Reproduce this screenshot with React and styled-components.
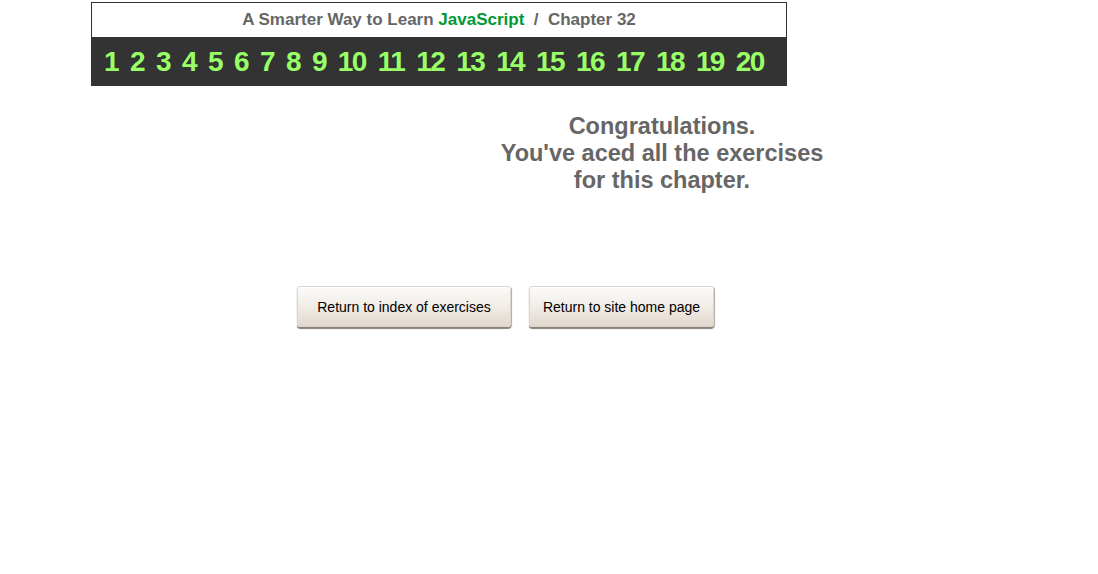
import React from "react";
import styled, { createGlobalStyle } from "styled-components";

const Global = createGlobalStyle`
  html, body { margin: 0; padding: 0; background: #fff; }
  body { font-family: "Liberation Sans", Arial, sans-serif; }
`;

const Page = styled.div`
  width: 1098px;
  height: 574px;
  padding-top: 2px;
  box-sizing: border-box;
`;

const Header = styled.div`
  margin-left: 91px;
  width: 696px;
  border: 1px solid #333;
  box-sizing: border-box;
`;

const TitleRow = styled.div`
  height: 34px;
  background: #fff;
  display: flex;
  align-items: center;
  justify-content: center;
  font-size: 17px;
  font-weight: bold;
  color: #666;
  white-space: pre;
`;

const Green = styled.span`
  color: #009933;
`;

const NumberBar = styled.div`
  height: 48px;
  background: #333;
  display: flex;
  align-items: center;
  padding-left: 12px;
  gap: 12px;
`;

const Num = styled.a`
  font-size: 28px;
  font-weight: bold;
  letter-spacing: -1.6px;
  color: #99ff66;
  text-decoration: none;
  line-height: 1;
  padding-top: 2px;
`;

const Message = styled.div`
  margin-top: 27px;
  margin-left: 412px;
  width: 500px;
  text-align: center;
  font-size: 23.5px;
  font-weight: bold;
  line-height: 27px;
  color: #666;
`;

const ButtonRow = styled.div`
  margin-top: 92px;
  margin-left: 297px;
  display: flex;
  gap: 18px;
`;

const Button = styled.button`
  width: ${(p) => p.$w}px;
  height: 41px;
  padding: 0;
  font-family: "Liberation Sans", Arial, sans-serif;
  font-size: 14px;
  color: #000;
  border: 1px solid #ddd5cd;
  border-radius: 3px;
  background: linear-gradient(#fcfbfa, #f2eee9 45%, #e2d8ce);
  box-shadow: 0 2px 1px #8a8178, 1px 1px 1px #b8aea4, inset 0 1px 0 #fff;
  cursor: pointer;
`;

export default function App() {
  const nums = Array.from({ length: 20 }, (_, i) => i + 1);
  return (
    <Page>
      <Global />
      <Header>
        <TitleRow>
          A Smarter Way to Learn <Green>JavaScript</Green>  /  Chapter 32
        </TitleRow>
        <NumberBar>
          {nums.map((n) => (
            <Num key={n} href="#">{n}</Num>
          ))}
        </NumberBar>
      </Header>
      <Message>
        Congratulations.
        <br />
        You've aced all the exercises
        <br />
        for this chapter.
      </Message>
      <ButtonRow>
        <Button $w={214}>Return to index of exercises</Button>
        <Button $w={185}>Return to site home page</Button>
      </ButtonRow>
    </Page>
  );
}
